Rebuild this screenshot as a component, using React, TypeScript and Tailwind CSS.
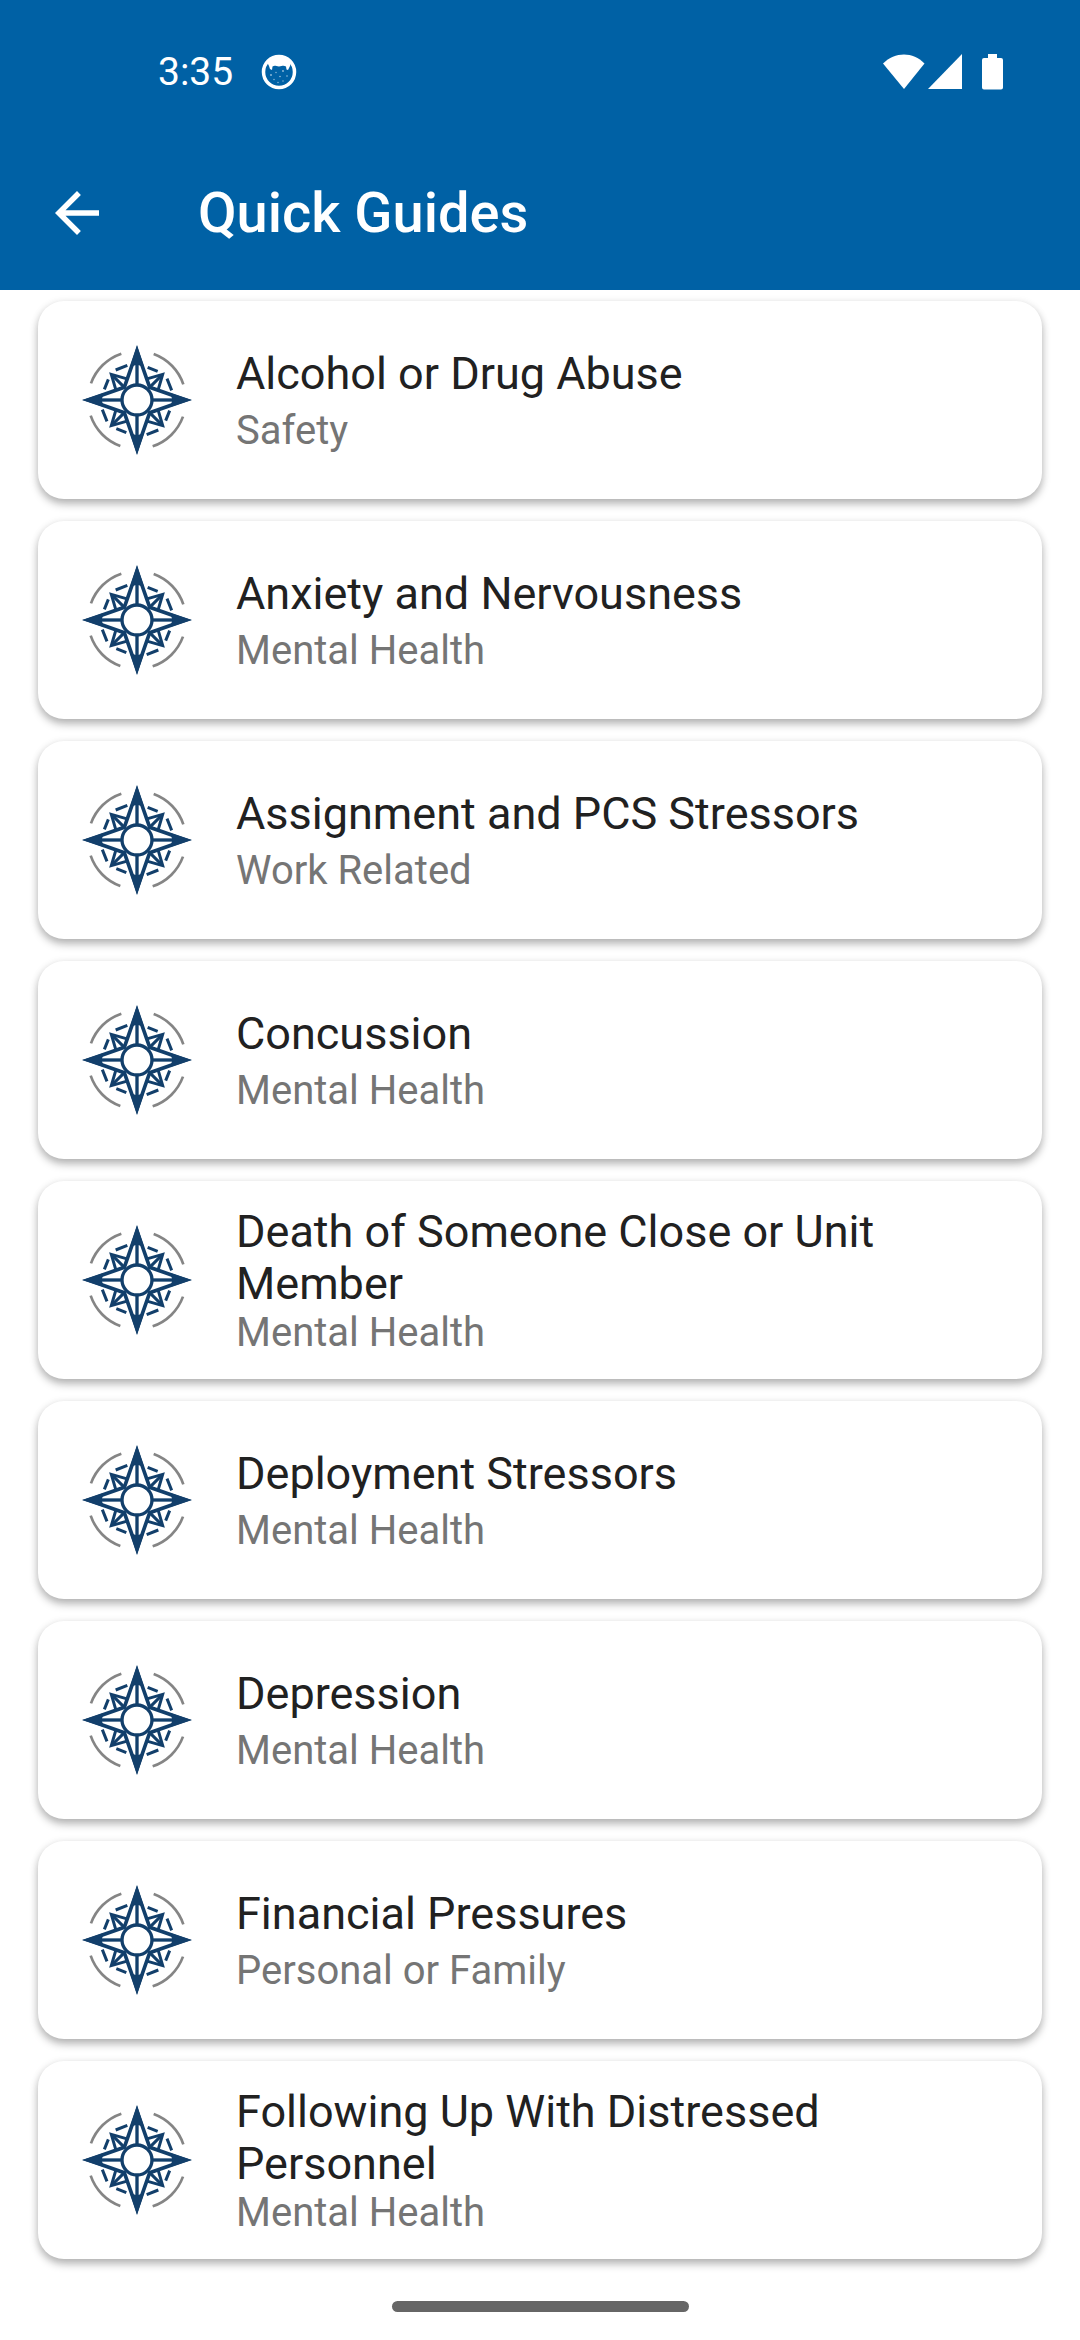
import { MdArrowBack } from 'react-icons/md';

interface Guide {
  title: string;
  category: string;
}

const guides: Guide[] = [
  { title: 'Alcohol or Drug Abuse', category: 'Safety' },
  { title: 'Anxiety and Nervousness', category: 'Mental Health' },
  { title: 'Assignment and PCS Stressors', category: 'Work Related' },
  { title: 'Concussion', category: 'Mental Health' },
  { title: 'Death of Someone Close or Unit Member', category: 'Mental Health' },
  { title: 'Deployment Stressors', category: 'Mental Health' },
  { title: 'Depression', category: 'Mental Health' },
  { title: 'Financial Pressures', category: 'Personal or Family' },
  { title: 'Following Up With Distressed Personnel', category: 'Mental Health' },
];

const quarterTurns = [0, 90, 180, 270];

const CompassLogo = () => (
  <svg viewBox="-165 -165 330 330" className="size-[110px] shrink-0" fill="none" aria-hidden="true">
    {quarterTurns.map((angle) => (
      <g key={angle} transform={`rotate(${angle})`}>
        {/* Outer grey arc and the two dashes inside it */}
        <path d="M-138 -50A147 147 0 0 1 -47 -139" stroke="#858585" strokeWidth="8" />
        <path d="M-64 -90L-29 -104M-86 -62L-98 -32" stroke="#123f6b" strokeWidth="9" />
        {/* Small diagonal point */}
        <path d="M-22 -61L-77 -77L-61 -22" stroke="#123f6b" strokeWidth="9" />
        <path d="M-74 -74L-34 -34" stroke="#123f6b" strokeWidth="9" />
      </g>
    ))}
    {/* Long points are filled white so they cover the diagonal ones */}
    <path
      d="M0 -147L38 -38L147 0L38 38L0 147L-38 38L-147 0L-38 -38Z"
      fill="#fff"
      stroke="#123f6b"
      strokeWidth="11"
    />
    {quarterTurns.map((angle) => (
      <g key={angle} transform={`rotate(${angle})`}>
        <path d="M0 -165L-21 -100L0 -106L21 -100Z" fill="#123f6b" />
        <path d="M0 -115V-45" stroke="#123f6b" strokeWidth="10" />
      </g>
    ))}
    <circle r="45" fill="#fff" stroke="#123f6b" strokeWidth="10" />
  </svg>
);

const NotificationIcon = () => (
  <svg viewBox="0 0 36 36" className="size-9" aria-hidden="true">
    <circle cx="18" cy="18" r="15.5" fill="none" stroke="#fff" strokeWidth="3.5" />
    <path
      d="M6 8C11 1 25 1 30 8L29 12L27 16L25.500 15.500L25 12.500C22 11 21 12.500 18 12.500C15 12.500 14 11 11.500 12.500L11 16L9 15L8 12Z"
      fill="#fff"
    />
    <g fill="#fff" fillOpacity="0.6">
      <circle cx="10" cy="21" r="0.9" />
      <circle cx="15" cy="18.500" r="0.7" />
      <circle cx="22" cy="17" r="0.9" />
      <circle cx="19" cy="22.500" r="0.8" />
      <circle cx="26" cy="22" r="0.8" />
      <circle cx="13" cy="25.500" r="0.7" />
      <circle cx="22" cy="27" r="0.7" />
      <circle cx="17" cy="28.500" r="0.7" />
    </g>
  </svg>
);

const StatusBar = () => (
  <div className="flex h-[136px] items-center justify-between pt-2 pr-[75px] pl-[158px]">
    <div className="flex items-center gap-7">
      <span className="text-[39px] leading-none">3:35</span>
      <NotificationIcon />
    </div>
    <svg viewBox="0 0 122 36" className="h-9 w-[122px]" fill="#fff" aria-hidden="true">
      <path d="M0 9.500C12 -2.500 30 -2.500 41.500 9.500L21 35Z" />
      <path d="M79 0V35H45Z" />
      <path d="M105 0H114V4H118Q120 4 120 6V33.500Q120 35.500 118 35.500H101Q99 35.500 99 33.500V6Q99 4 101 4H105Z" />
    </svg>
  </div>
);

const GuideCard = ({ title, category }: Guide) => (
  <li>
    <a
      href="#"
      className="flex min-h-[198px] items-center gap-11 rounded-[26px] bg-white px-11 shadow-[0_5px_8px_rgba(0,0,0,0.27),0_1px_8px_rgba(0,0,0,0.08)]"
    >
      <CompassLogo />
      <div className="min-w-0">
        <h2 className="min-h-[60px] text-[45px] leading-[52px] text-[#212121]">{title}</h2>
        <p className="text-[40px] leading-[45px] text-[#757575]">{category}</p>
      </div>
    </a>
  </li>
);

const App = () => {
  return (
    <div className="flex min-h-screen flex-col bg-white font-[Roboto,sans-serif]">
      <header className="bg-[#0061a5] text-white">
        <StatusBar />
        <div className="flex h-[154px] items-center gap-[88px] px-11">
          <button type="button" aria-label="Back">
            <MdArrowBack className="size-[66px]" />
          </button>
          <h1 className="text-[56px] leading-none font-medium">Quick Guides</h1>
        </div>
      </header>

      <main className="grow px-[38px] pt-[11px]">
        <ul className="flex flex-col gap-[22px]">
          {guides.map((guide) => (
            <GuideCard key={guide.title} {...guide} />
          ))}
        </ul>
      </main>

      <footer className="flex justify-center pt-[42px] pb-7">
        <div className="h-[11px] w-[297px] rounded-full bg-[#666666]" />
      </footer>
    </div>
  );
};

export default App;
